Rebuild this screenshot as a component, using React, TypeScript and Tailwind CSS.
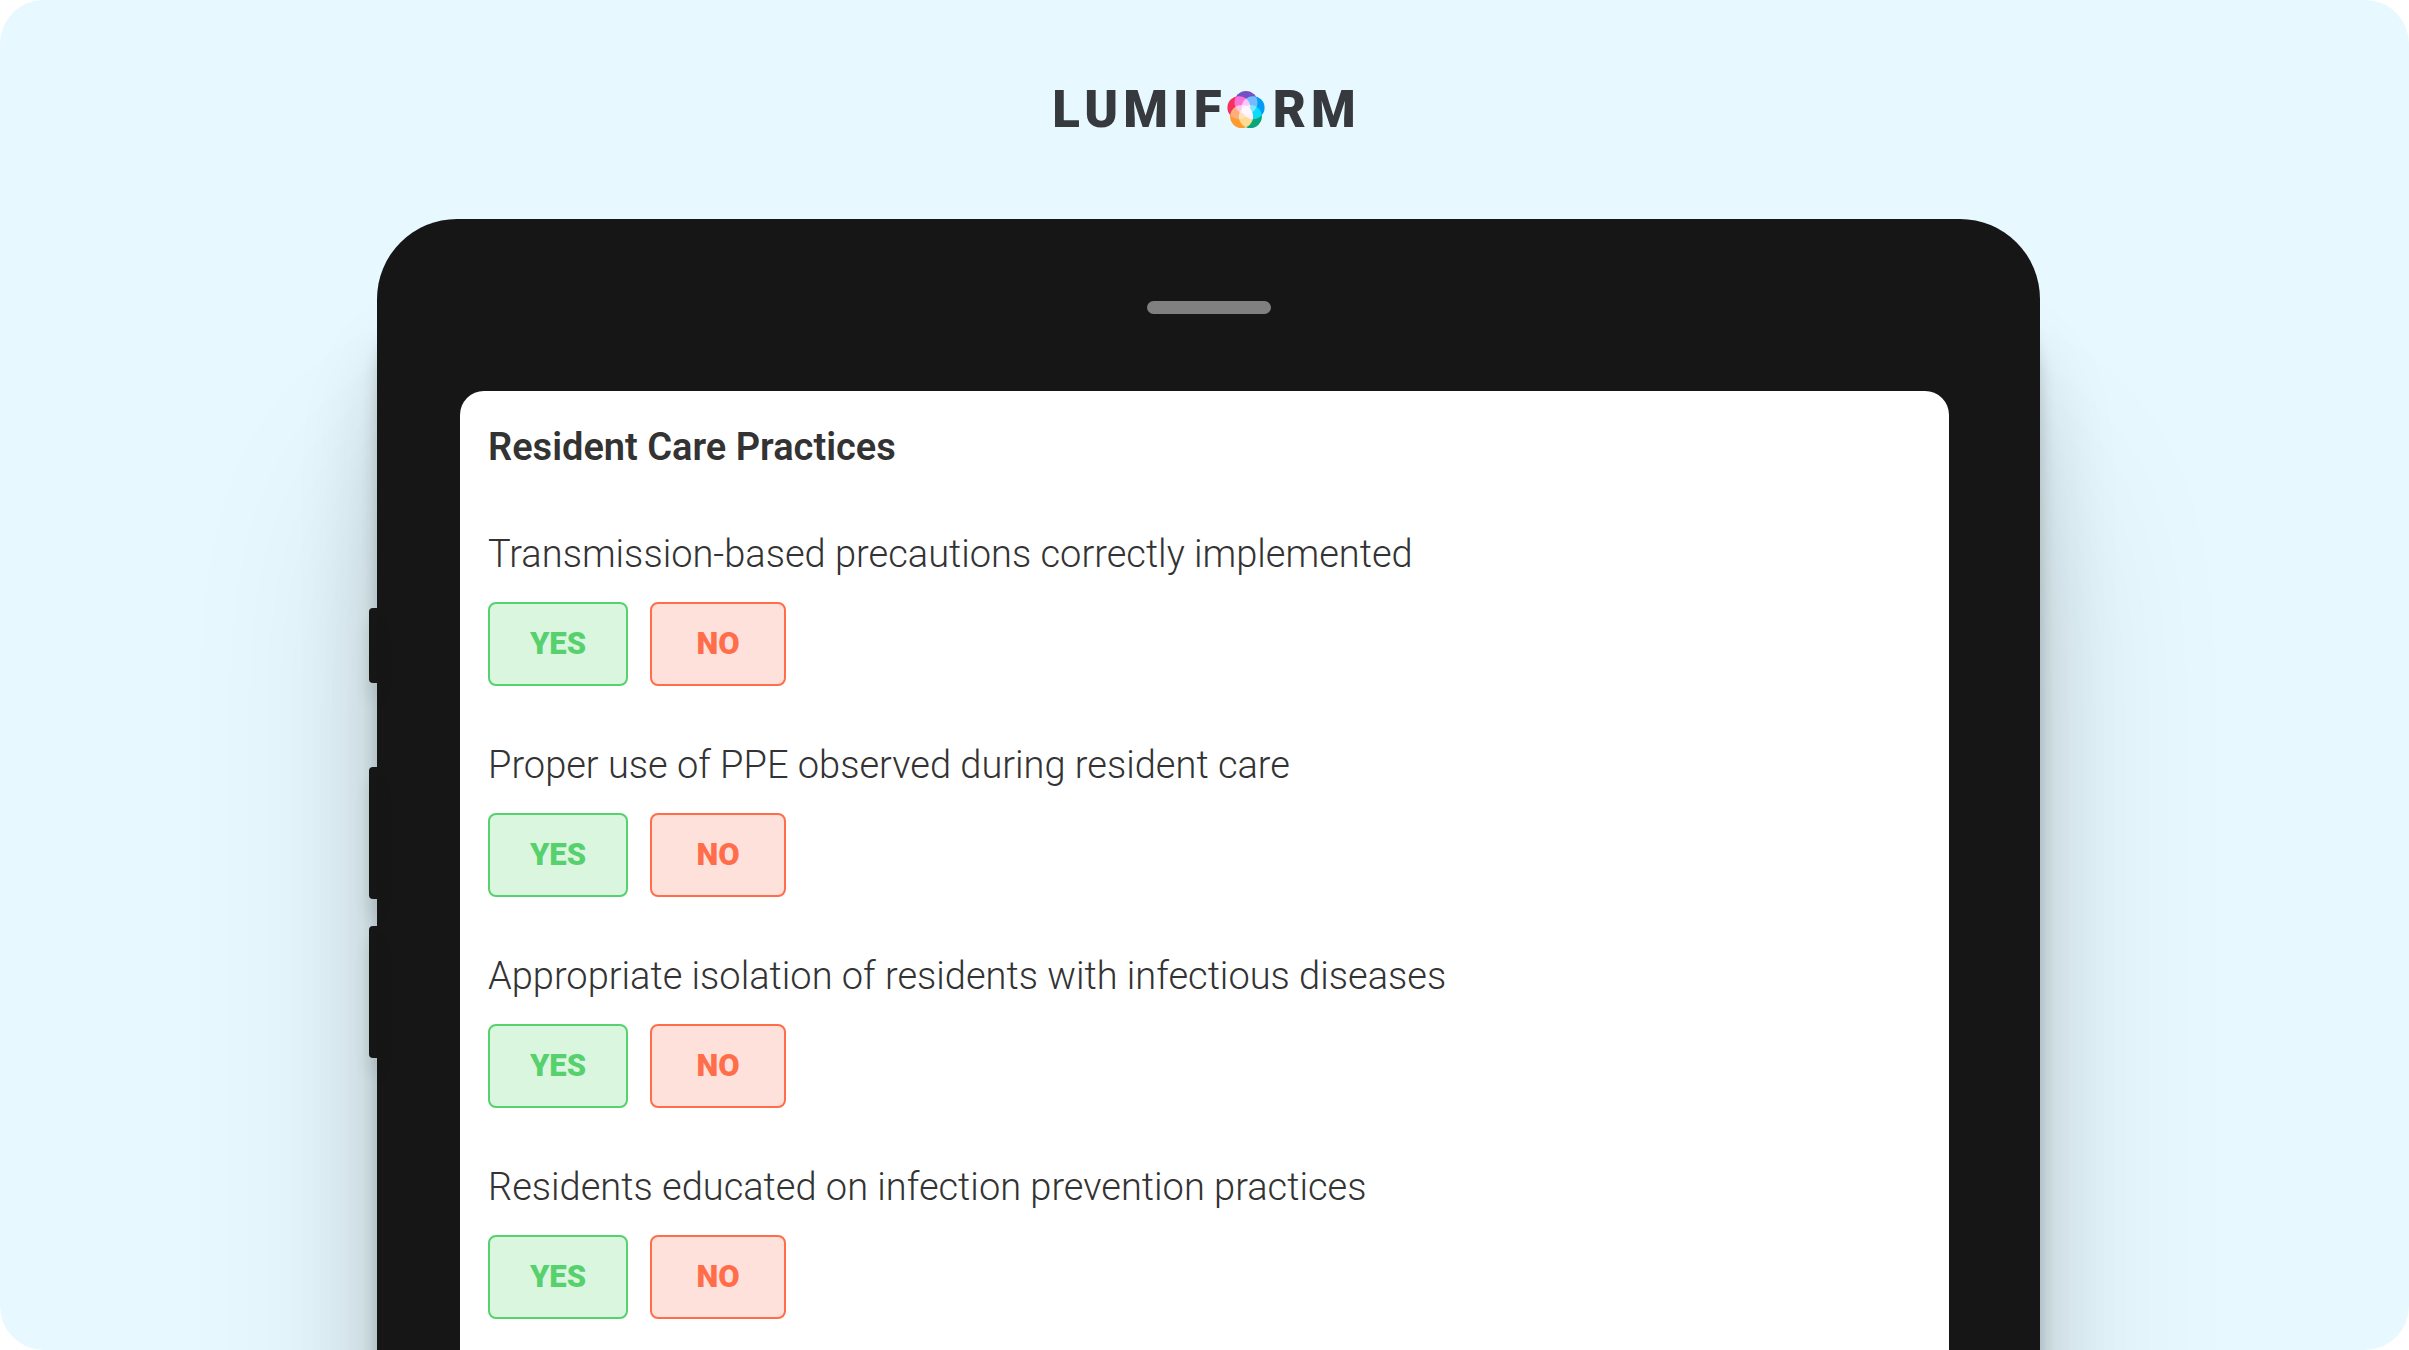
const questions = [
  "Transmission-based precautions correctly implemented",
  "Proper use of PPE observed during resident care",
  "Appropriate isolation of residents with infectious diseases",
  "Residents educated on infection prevention practices",
];

function Orb() {
  return (
    <svg viewBox="0 0 38 38" className="isolate size-[38px]" role="img" aria-label="O">
      <circle className="mix-blend-screen" cx="19" cy="11.5" r="11.5" fill="#7450c4" />
      <circle className="mix-blend-screen" cx="11.9" cy="16.7" r="11.5" fill="#f5305c" />
      <circle className="mix-blend-screen" cx="26.1" cy="16.7" r="11.5" fill="#009cf5" />
      <circle className="mix-blend-screen" cx="23.4" cy="25.6" r="11.5" fill="#0ba57a" />
      <circle className="mix-blend-screen" cx="14.6" cy="25.6" r="11.5" fill="#ff9a2e" />
    </svg>
  );
}

function Logo() {
  return (
    <h1 className="flex items-center pl-1 font-['Roboto',sans-serif] text-[51px] leading-[60px] font-black text-[#36393d]">
      <span className="tracking-widest">LUMIF</span>
      <Orb />
      <span className="pl-2 tracking-widest">RM</span>
    </h1>
  );
}

function Question({ text }: { text: string }) {
  return (
    <fieldset className="flex flex-col">
      <legend className="text-[38px] leading-[48px] font-light">{text}</legend>
      <div className="flex gap-[22px] pt-6 text-[31px] leading-[40px] font-black">
        <button type="button" className="h-[84px] w-[140px] rounded-lg border-2 border-[#56d16e] bg-[#dbf6df] text-[#56d16e]">
          YES
        </button>
        <button type="button" className="h-[84px] w-[136px] rounded-lg border-2 border-[#ff6d4a] bg-[#ffe1db] text-[#ff6d4a]">
          NO
        </button>
      </div>
    </fieldset>
  );
}

export default function App() {
  return (
    <div className="bg-white">
      <main className="flex h-screen flex-col items-center overflow-hidden rounded-[44px] bg-[#e7f9ff] pt-20 font-['Roboto',sans-serif] text-[#333333]">
        <Logo />
        <div className="mt-[79px] flex w-full max-w-[1671px] grow">
          <div className="z-20 flex w-2 shrink-0 flex-col pt-[389px]">
            <div className="h-[75px] rounded-l bg-[#161616] shadow-[0_16px_16px_rgba(0,0,0,0.1)]" />
            <div className="mt-[84px] h-[132px] rounded-l bg-[#161616] shadow-[0_16px_16px_rgba(0,0,0,0.1)]" />
            <div className="mt-[27px] h-[132px] rounded-l bg-[#161616] shadow-[0_16px_16px_rgba(0,0,0,0.1)]" />
          </div>
          <div className="z-10 flex h-[2200px] grow flex-col items-stretch rounded-[80px] bg-[#161616] pt-[82px] pr-[91px] pl-[83px] shadow-[0_80px_16px_rgba(0,0,0,0.18),0_130px_80px_rgba(0,0,0,0.16),0_250px_200px_rgba(0,0,0,0.12)]">
            <div className="ml-2 h-[13px] w-[124px] self-center rounded-full bg-[#808080]" />
            <section className="mt-[77px] grow rounded-3xl bg-white px-7 pt-8">
              <h2 className="text-[38px] leading-[48px] font-semibold">Resident Care Practices</h2>
              <div className="flex flex-col gap-[55px] pt-[59px]">
                {questions.map((q) => (
                  <Question key={q} text={q} />
                ))}
              </div>
            </section>
          </div>
        </div>
      </main>
    </div>
  );
}
